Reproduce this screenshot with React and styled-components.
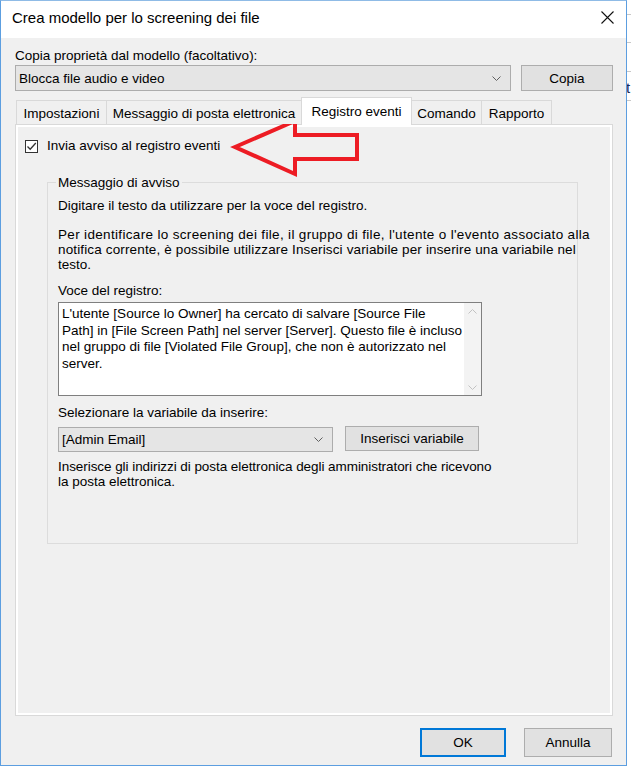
import React from "react";
import styled, { createGlobalStyle } from "styled-components";

const GlobalStyle = createGlobalStyle`
  html, body { margin: 0; padding: 0; background: #ffffff; }
  body {
    font-family: "Liberation Sans", Arial, sans-serif;
    font-size: 13.5px;
    color: #000;
  }
  * { box-sizing: border-box; }
`;

const Page = styled.div`
  position: relative;
  display: flex;
  width: 631px;
  height: 767px;
  overflow: hidden;
`;

const Window = styled.div`
  width: 627px;
  height: 766px;
  border: 1px solid #5c9ee0;
  border-top-color: #8fbbe6;
  background: #f0f0f0;
  display: flex;
  flex-direction: column;
`;

const TitleBar = styled.div`
  height: 37px;
  background: #ffffff;
  display: flex;
  align-items: center;
  justify-content: space-between;
  padding: 0 12px 4px 11px;
  font-size: 15px;
  white-space: nowrap;
`;

const Body = styled.div`
  flex: 1;
  display: flex;
  flex-direction: column;
  padding: 0 13px 0 14px;
`;

const Line = styled.div`
  line-height: ${(p) => p.$lh || 15}px;
  margin-top: ${(p) => p.$mt || 0}px;
  white-space: nowrap;
`;

const Spaced = styled.span`
  display: block;
  letter-spacing: ${(p) => p.$ls || 0}px;
`;

const Row = styled.div`
  display: flex;
  align-items: flex-start;
  gap: ${(p) => p.$gap}px;
  margin-top: ${(p) => p.$mt || 0}px;
`;

const Combo = styled.div`
  flex: ${(p) => (p.$w ? "none" : "1")};
  width: ${(p) => (p.$w ? `${p.$w}px` : "auto")};
  height: ${(p) => p.$h}px;
  margin-top: ${(p) => p.$mt || 0}px;
  background: #e5e5e5;
  border: 1px solid #acacac;
  display: flex;
  align-items: center;
  justify-content: space-between;
  padding: 0 9px 0 3px;
  white-space: nowrap;
`;

const Button = styled.div`
  width: ${(p) => p.$w}px;
  height: ${(p) => p.$h}px;
  flex: none;
  background: #e1e1e1;
  border: 1px solid ${(p) => (p.$default ? "#0078d7" : "#adadad")};
  box-shadow: ${(p) => (p.$default ? "inset 0 0 0 1px #0078d7" : "none")};
  display: flex;
  align-items: center;
  justify-content: center;
  white-space: nowrap;
`;

const TabStrip = styled.div`
  display: flex;
  align-items: flex-end;
  height: 28px;
  margin-top: 6px;
  margin-bottom: -1px;
  padding-left: 1px;
  position: relative;
  z-index: 1;
`;

const Tab = styled.div`
  width: ${(p) => p.$w}px;
  height: ${(p) => (p.$active ? 28 : 24)}px;
  margin-bottom: ${(p) => (p.$active ? 0 : 1)}px;
  margin-left: -1px;
  background: ${(p) => (p.$active ? "#ffffff" : "#f0f0f0")};
  border: 1px solid #d9d9d9;
  border-bottom: none;
  display: flex;
  align-items: center;
  justify-content: center;
  padding-top: ${(p) => (p.$active ? 0 : 1)}px;
  padding-bottom: ${(p) => (p.$active ? 1 : 0)}px;
  white-space: nowrap;
  &:first-child { margin-left: 0; }
`;

const Panel = styled.div`
  height: 592px;
  border: 1px solid #d9d9d9;
  box-shadow: inset 0 0 0 2px #ffffff;
  padding: 13px 0 0 9px;
  display: flex;
  flex-direction: column;
`;

const CheckRow = styled.div`
  display: flex;
  align-items: center;
  gap: 9px;
  height: 16px;
  line-height: 16px;
`;

const CheckBox = styled.div`
  width: 13px;
  height: 13px;
  border: 1px solid #333333;
  background: #ffffff;
  display: flex;
  align-items: center;
  justify-content: center;
`;

const Group = styled.fieldset`
  margin: 21px 0 0 22px;
  width: 531px;
  height: 369px;
  border: 1px solid #dcdcdc;
  padding: 0 10px;
  min-width: 0;
`;

const Legend = styled.legend`
  padding: 0 2px;
  margin-left: -2px;
  line-height: 15px;
  height: 15px;
`;

const TextBox = styled.div`
  margin-top: 4px;
  width: 424px;
  height: 94px;
  border: 1px solid #7f7f7f;
  background: #ffffff;
  display: flex;
`;

const TextContent = styled.div`
  flex: 1;
  padding: 3px 0 0 3px;
  line-height: 16.5px;
  white-space: nowrap;
`;

const ScrollBar = styled.div`
  width: 17px;
  background: #f3f3f3;
  display: flex;
  flex-direction: column;
  justify-content: space-between;
  align-items: center;
  padding: 6px 0 5px;
`;

const Footer = styled.div`
  display: flex;
  justify-content: flex-end;
  gap: 18px;
  margin-top: 12px;
  padding-right: 1px;
`;

const BackStrip = styled.div`
  width: 4px;
  overflow: hidden;
  display: flex;
  flex-direction: column;
  font-size: 15px;
  color: #1b2a55;
`;

const Tick = styled.div`
  height: 1px;
  background: #c8c8c8;
  margin-top: ${(p) => p.$mt}px;
  flex: none;
`;

const BackGlyph = styled.div`
  line-height: 12px;
  margin-top: ${(p) => p.$mt}px;
  margin-left: -1px;
`;

const Arrow = styled.svg`
  position: absolute;
  left: 230px;
  top: 117px;
  overflow: visible;
`;

const Chevron = ({ up, color = "#606060" }) => (
  <svg width="9" height="5" viewBox="0 0 9 5">
    <path
      d={up ? "M0.5 4.5 L4.5 0.5 L8.5 4.5" : "M0.5 0.5 L4.5 4.5 L8.5 0.5"}
      fill="none"
      stroke={color}
      strokeWidth="1"
    />
  </svg>
);

export default function App() {
  return (
    <>
      <GlobalStyle />
      <Page>
        <Window>
          <TitleBar>
            <span>Crea modello per lo screening dei file</span>
            <svg width="13" height="13" viewBox="0 0 13 13">
              <path d="M0.5 0.5 L12.5 12.5 M12.5 0.5 L0.5 12.5" stroke="#111" strokeWidth="1.1" />
            </svg>
          </TitleBar>
          <Body>
            <Line $mt={10}>Copia proprietà dal modello (facoltativo):</Line>
            <Row $gap={10} $mt={2}>
              <Combo $h={26}>
                <span>Blocca file audio e video</span>
                <Chevron />
              </Combo>
              <Button $w={92} $h={26}>Copia</Button>
            </Row>
            <TabStrip>
              <Tab $w={91}>Impostazioni</Tab>
              <Tab $w={196}>Messaggio di posta elettronica</Tab>
              <Tab $w={111} $active>Registro eventi</Tab>
              <Tab $w={71}>Comando</Tab>
              <Tab $w={71}>Rapporto</Tab>
            </TabStrip>
            <Panel>
              <CheckRow>
                <CheckBox>
                  <svg width="11" height="11" viewBox="0 0 11 11">
                    <path d="M1.5 5.5 L4.2 8.3 L9.8 2" fill="none" stroke="#333" strokeWidth="1.3" />
                  </svg>
                </CheckBox>
                <span>Invia avviso al registro eventi</span>
              </CheckRow>
              <Group>
                <Legend>Messaggio di avviso</Legend>
                <Line $mt={8}>Digitare il testo da utilizzare per la voce del registro.</Line>
                <Line $mt={14}>
                  <Spaced $ls={0.33}>
                    Per identificare lo screening dei file, il gruppo di file, l'utente o l'evento associato alla
                  </Spaced>
                  <Spaced $ls={0.14}>
                    notifica corrente, è possibile utilizzare Inserisci variabile per inserire una variabile nel
                  </Spaced>
                  <Spaced>testo.</Spaced>
                </Line>
                <Line $mt={11}>Voce del registro:</Line>
                <TextBox>
                  <TextContent>
                    L'utente [Source lo Owner] ha cercato di salvare [Source File
                    <br />
                    Path] in [File Screen Path] nel server [Server]. Questo file è incluso
                    <br />
                    nel gruppo di file [Violated File Group], che non è autorizzato nel
                    <br />
                    server.
                  </TextContent>
                  <ScrollBar>
                    <Chevron up color="#c2c2c2" />
                    <Chevron color="#c2c2c2" />
                  </ScrollBar>
                </TextBox>
                <Line $mt={9}>Selezionare la variabile da inserire:</Line>
                <Row $gap={12} $mt={6}>
                  <Combo $w={275} $h={25} $mt={1}>
                    <span>[Admin Email]</span>
                    <Chevron />
                  </Combo>
                  <Button $w={134} $h={25}>Inserisci variabile</Button>
                </Row>
                <Line $mt={7}>
                  <Spaced $ls={-0.06}>
                    Inserisce gli indirizzi di posta elettronica degli amministratori che ricevono
                  </Spaced>
                  <Spaced>la posta elettronica.</Spaced>
                </Line>
              </Group>
            </Panel>
            <Footer>
              <Button $w={86} $h={29} $default>OK</Button>
              <Button $w={88} $h={29}>Annulla</Button>
            </Footer>
          </Body>
        </Window>
        <BackStrip>
          <Tick $mt={14} />
          <Tick $mt={27} />
          <Tick $mt={28} />
          <BackGlyph $mt={10}>t</BackGlyph>
          <Tick $mt={6} />
        </BackStrip>
        <Arrow width="132" height="62" viewBox="0 0 132 62">
          <path
            d="M5 30 L65 4 L65 18 L127 18 L127 42 L65 42 L65 57 Z"
            fill="none"
            stroke="#ed1c24"
            strokeWidth="4"
            strokeLinejoin="miter"
          />
        </Arrow>
      </Page>
    </>
  );
}
